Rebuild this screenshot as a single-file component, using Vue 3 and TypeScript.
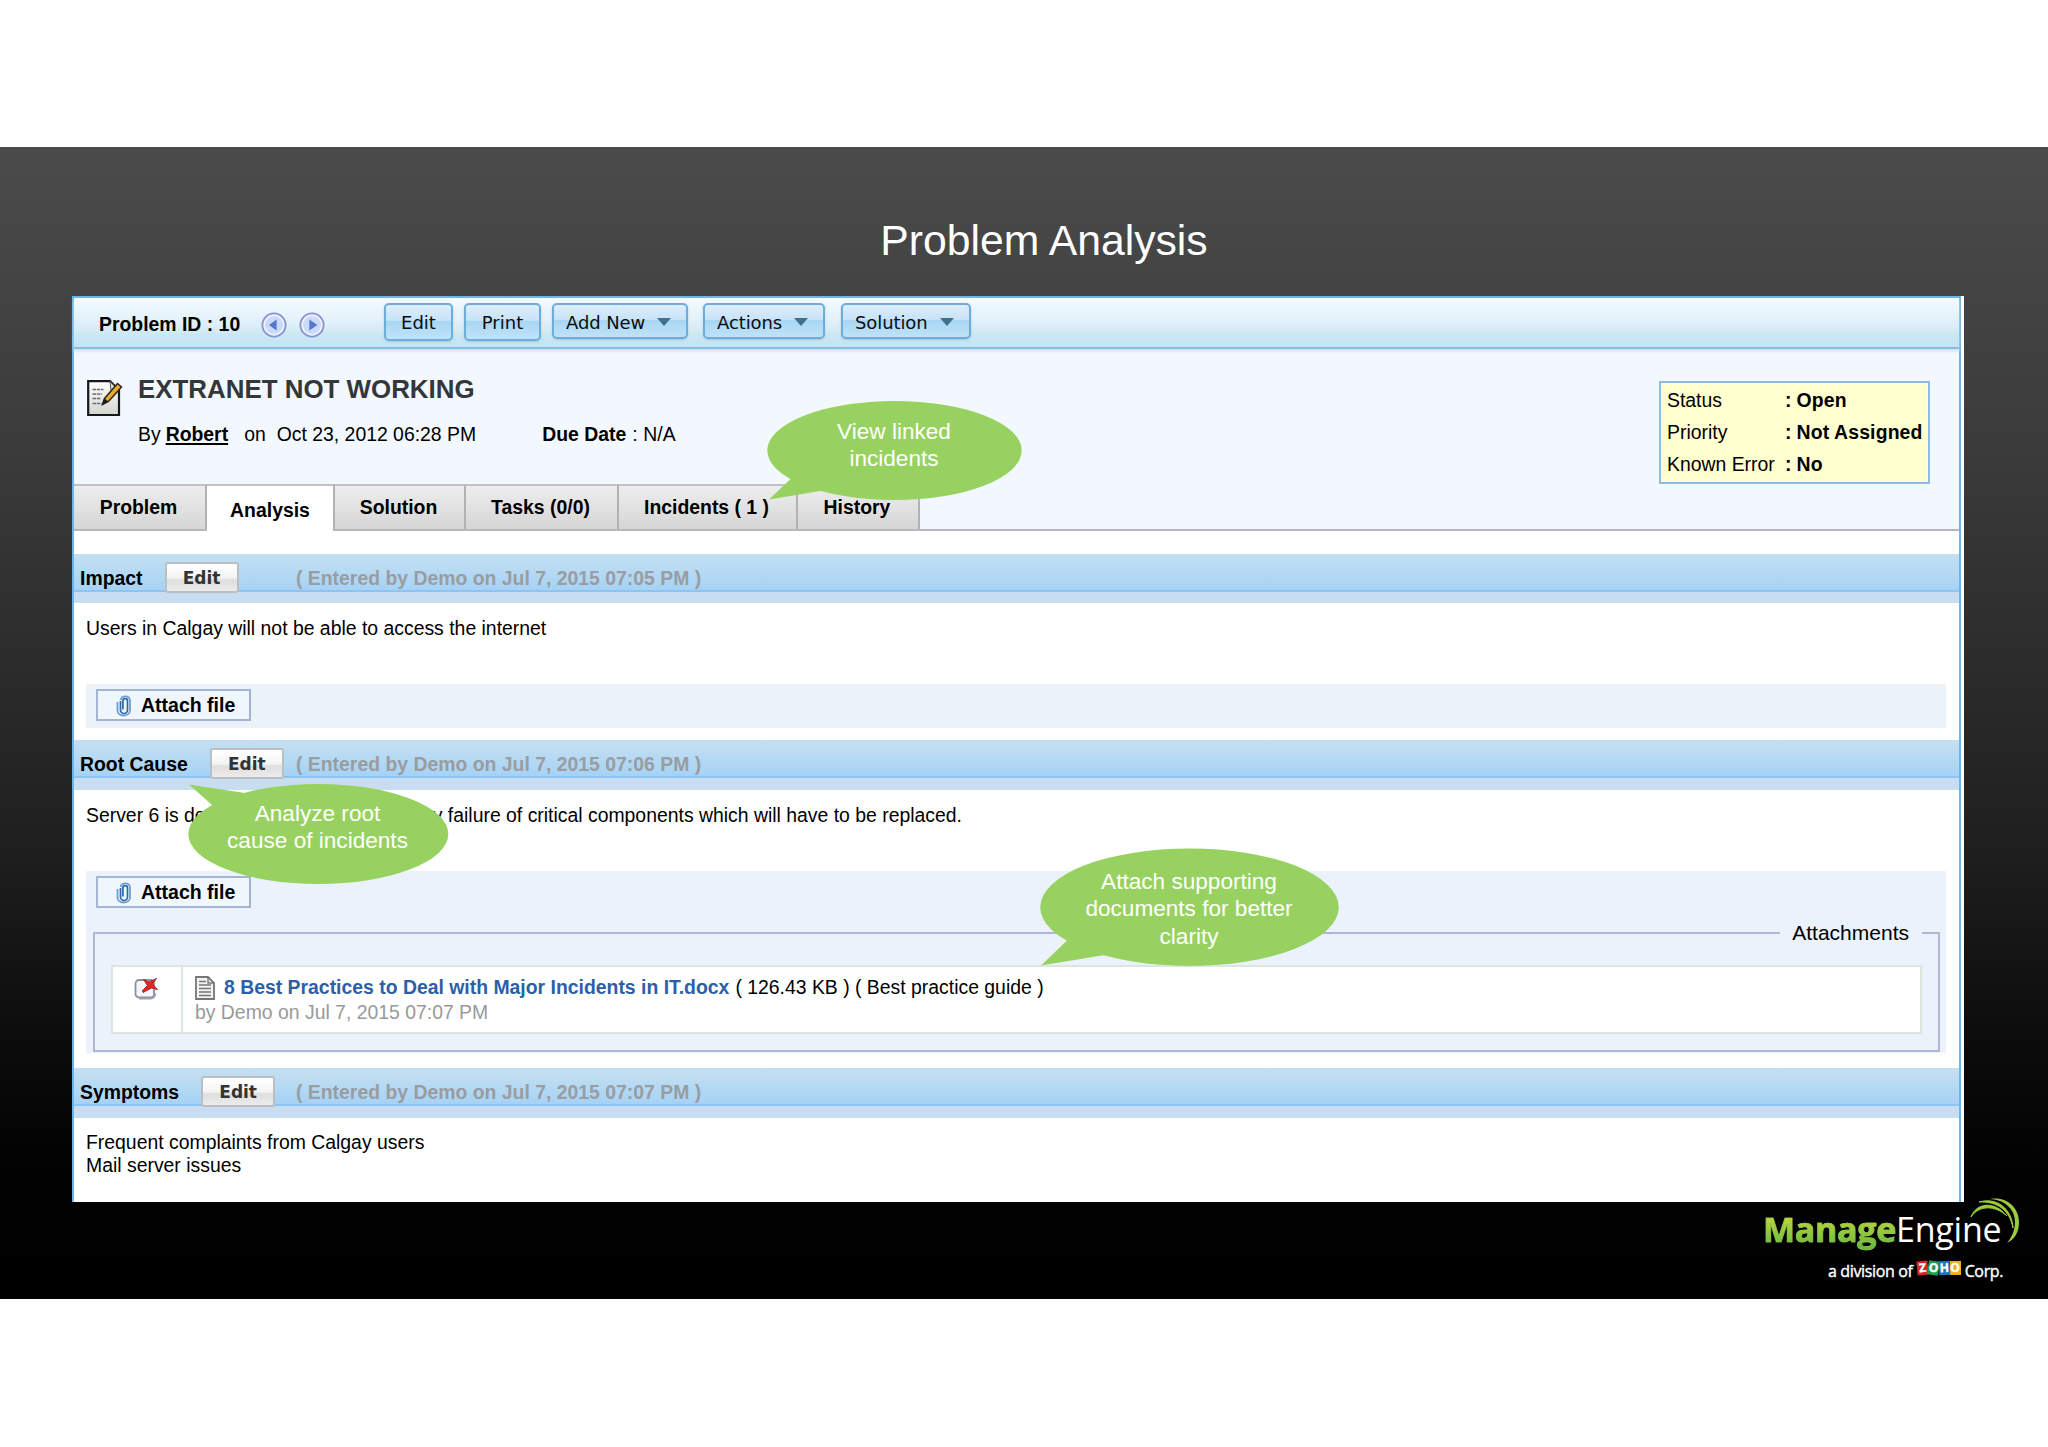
<script setup lang="ts">
interface MenuButton { label: string; width: number; menu: boolean; gap: number }
interface Tab { label: string; width: number; active?: boolean }

const buttons: MenuButton[] = [
  { label: 'Edit', width: 69, menu: false, gap: 11 },
  { label: 'Print', width: 77, menu: false, gap: 11 },
  { label: 'Add New', width: 136, menu: true, gap: 15 },
  { label: 'Actions', width: 122, menu: true, gap: 16 },
  { label: 'Solution', width: 130, menu: true, gap: 0 },
]
const tabs: Tab[] = [
  { label: 'Problem', width: 133 },
  { label: 'Analysis', width: 128, active: true },
  { label: 'Solution', width: 131 },
  { label: 'Tasks (0/0)', width: 153 },
  { label: 'Incidents ( 1 )', width: 179 },
  { label: 'History', width: 122 },
]
const facts = [
  { key: 'Status', value: 'Open' },
  { key: 'Priority', value: 'Not Assigned' },
  { key: 'Known Error', value: 'No' },
]
</script>

<template>
  <div class="page">
    <main class="slide">
      <h1 class="slide-title">Problem Analysis</h1>

      <section class="panel">
        <div class="frame">
          <div class="toolbar">
            <b class="pid">Problem ID : 10</b>
            <svg class="nav" viewBox="0 0 26 26"><circle cx="13" cy="13" r="11.6" fill="#eef2fe" stroke="#8793cf" stroke-width="1.8" /><circle cx="13" cy="13" r="9" fill="#cbdafb" /><path d="M15.6 7.500v11L8 13z" fill="#5577cf" /></svg>
            <svg class="nav second" viewBox="0 0 26 26"><circle cx="13" cy="13" r="11.6" fill="#eef2fe" stroke="#8793cf" stroke-width="1.8" /><circle cx="13" cy="13" r="9" fill="#cbdafb" /><path d="M10.4 7.500v11l8-5.500z" fill="#5577cf" /></svg>
            <div class="buttons">
              <button v-for="b in buttons" :key="b.label" class="tool" :class="{ menu: b.menu }" :style="{ width: b.width + 'px', marginRight: b.gap + 'px' }">
                <span>{{ b.label }}</span><i v-if="b.menu" class="caret" />
              </button>
            </div>
          </div>

          <header class="head">
            <svg class="note" viewBox="0 0 36 38">
              <defs><linearGradient id="paper" x1="0" y1="0" x2="0" y2="1"><stop offset="0" stop-color="#fff" /><stop offset="1" stop-color="#d3d4cf" /></linearGradient></defs>
              <path d="M1.200 2.200H23l9 9V36H1.200z" fill="url(#paper)" stroke="#15181c" stroke-width="2.200" />
              <path d="M23 2.500l8.500 9H24z" fill="#dcdedb" stroke="#555" stroke-width="1" />
              <path d="M5.500 10.500h11M5.500 15h9.500M5.500 19.500h8M5.500 24.500h9" stroke="#666b73" stroke-width="1.700" stroke-dasharray="3.500 .8" />
              <path d="M17.500 19.500L30.500 4.500l4 3.500L21.500 22.500l-6 3z" fill="#e8a92c" stroke="#2d2417" stroke-width="1.500" />
              <path d="M17.500 19.500l4 3-7 3.500z" fill="#1d1d1d" />
            </svg>
            <div class="head-text">
              <h2>EXTRANET NOT WORKING</h2>
              <p class="meta"><span>By</span><b class="robert">Robert</b><span class="on">on</span><span class="date">Oct 23, 2012 06:28 PM</span><b class="due">Due Date</b><span class="na">: N/A</span></p>
            </div>
            <dl class="facts">
              <div v-for="f in facts" :key="f.key"><dt>{{ f.key }}</dt><dd class="colon">:</dd><dd class="value">{{ f.value }}</dd></div>
            </dl>
          </header>

          <nav class="tabs">
            <div v-for="t in tabs" :key="t.label" class="tab" :class="{ active: t.active }" :style="{ width: t.width + 'px' }">{{ t.label }}</div>
          </nav>

          <div class="bar first"><b class="bar-name">Impact</b><button class="edit">Edit</button><span class="entered">( Entered by Demo on Jul 7, 2015 07:05 PM )</span></div>
          <div class="body impact">
            <p>Users in Calgay will not be able to access the internet</p>
            <div class="attach-strip">
              <button class="attach"><svg class="clip" viewBox="0 0 16 22"><path d="M4.500 6v9a3.500 3.500 0 0 0 7 0V6a2.300 2.300 0 0 0-4.600 0v8.500" fill="none" stroke="#2d68aa" stroke-width="1.700" /><path d="M1.500 7v8.500c0 3 2.500 5 6 5s6.500-2 6.500-5V5.500C14 3 12 1.300 9.500 1.300S5 3 4.500 5" fill="none" stroke="#6ea0cf" stroke-width="1.800" /></svg><span>Attach file</span></button>
            </div>
          </div>

          <div class="bar"><b class="bar-name">Root Cause</b><button class="edit">Edit</button><span class="entered">( Entered by Demo on Jul 7, 2015 07:06 PM )</span></div>
          <div class="body root">
            <p class="server"><span class="lead">Server 6 is down</span><span>by failure of critical components which will have to be replaced.</span></p>
            <div class="attach-strip tall">
              <button class="attach"><svg class="clip" viewBox="0 0 16 22"><path d="M4.500 6v9a3.500 3.500 0 0 0 7 0V6a2.300 2.300 0 0 0-4.600 0v8.500" fill="none" stroke="#2d68aa" stroke-width="1.700" /><path d="M1.500 7v8.500c0 3 2.500 5 6 5s6.500-2 6.500-5V5.500C14 3 12 1.300 9.500 1.300S5 3 4.500 5" fill="none" stroke="#6ea0cf" stroke-width="1.800" /></svg><span>Attach file</span></button>
              <div class="group">
                <span class="legend">Attachments</span>
                <div class="file-row">
                  <div class="file-del">
                    <svg viewBox="0 0 24 22"><rect x="1.500" y="2" width="18.500" height="17.500" rx="3.500" fill="#f4f5f8" stroke="#8a90a0" stroke-width="1.800" /><path d="M5 20.500h12q4-.5 4.500-5" fill="none" stroke="#9ba0b0" stroke-width="1.800" /><path d="M9.500 1.500l5.500 2.500L22.500.5l-4 5.500 5 5.500-6-1.500-8.500 4.500-.5-2 5-5z" fill="#e0261f" stroke="#a8282a" stroke-width="1" /></svg>
                  </div>
                  <div class="file-info">
                    <div class="file-name"><svg viewBox="0 0 20 24"><path d="M1 1h12l6 6v16H1z" fill="#f2f2f2" stroke="#777" stroke-width="1.800" /><path d="M13 1v6h6" fill="none" stroke="#777" stroke-width="1.400" /><path d="M4 5.500h7M4 9h12M4 12.500h12M4 16h12M4 19.500h12" stroke="#777" stroke-width="1.500" /></svg><a>8 Best Practices to Deal with Major Incidents in IT.docx</a><span class="size">( 126.43 KB ) ( Best practice guide )</span></div>
                    <div class="file-by">by Demo on Jul 7, 2015 07:07 PM</div>
                  </div>
                </div>
              </div>
            </div>
          </div>

          <div class="bar"><b class="bar-name">Symptoms</b><button class="edit">Edit</button><span class="entered">( Entered by Demo on Jul 7, 2015 07:07 PM )</span></div>
          <div class="body"><p class="two">Frequent complaints from Calgay users<br>Mail server issues</p></div>
        </div>
      </section>

      <div class="bubble b1">
        <svg viewBox="767 400 256 101" fill="#97d260"><ellipse cx="894.500" cy="450.500" rx="127.200" ry="49.500" /><path d="M790.500 479L769 499.500L820 491L850 460z" /></svg>
        <p>View linked<br>incidents</p>
      </div>
      <div class="bubble b2">
        <svg viewBox="188 783 261 102" fill="#97d260"><ellipse cx="318.300" cy="834" rx="130" ry="50" /><path d="M245 793L189 784.500L212 805L270 830z" /></svg>
        <p>Analyze root<br>cause of incidents</p>
      </div>
      <div class="bubble b3">
        <svg viewBox="1040 847 300 120" fill="#97d260"><ellipse cx="1189.500" cy="907.200" rx="149.300" ry="58.800" /><path d="M1067.500 940L1041 965.500L1105 955L1140 920z" /></svg>
        <p>Attach supporting<br>documents for better<br>clarity</p>
      </div>

      <div class="logo">
        <div class="brand"><b>Manage</b><span>Engine</span></div>
        <svg class="swoosh" viewBox="1965 1195 60 52" fill="#9ccb3b"><path d="M1971 1217c5-14 23-17 36-1-12-11-28-11-36 1z" stroke="#9ccb3b" stroke-width="1" /><path d="M1979 1202c17-5 33 6 34 26-3-17-15-27-34-26z" stroke="#9ccb3b" stroke-width="1" /><path d="M1990 1199c16-3 29 8 29 23 0 10-4 17-12 21 5-6 8-13 8-21 0-12-9-22-25-23z" /></svg>
        <div class="corp"><span>a division of</span><span class="zoho"><i>Z</i><i>O</i><i>H</i><i>O</i></span><span>Corp.</span></div>
      </div>
    </main>
  </div>
</template>

<style>
body { margin: 0; background: #fff; }
</style>

<style scoped>
* { box-sizing: border-box; }
.page { width: 2048px; height: 1447px; overflow: hidden; padding-top: 147px; background: #fff; font-family: "Liberation Sans", Arial, sans-serif; font-size: 19.400px; color: #000; }
h1, h2, p, dl, dd { margin: 0; }
button { font-family: inherit; margin: 0; padding: 0; }
.slide { position: relative; height: 1152px; background: linear-gradient(180deg, #4b4b4b 0, #444 130px, #3b3b3b 300px, #2f2f2f 470px, #1f1f1f 700px, #0d0d0d 880px, #020202 1020px, #000 100%); }
.slide-title { height: 149px; padding: 68px 0 0 40px; text-align: center; font-size: 42.700px; line-height: 50px; font-weight: 400; color: #fff; white-space: nowrap; }
.panel { width: 1892px; height: 906px; margin-left: 72px; padding-right: 3px; background: #fff; }
.frame { height: 906px; border: 2px solid #6db4e6; border-bottom: 0; white-space: nowrap; }

.toolbar { display: flex; height: 51px; padding-left: 25px; border-bottom: 2px solid #84bfe2; background: linear-gradient(#f5faff, #ddeff9 55%, #cbe8f2 75%, #c3e4f6); box-shadow: 0 2px 3px #cfdde8; position: relative; }
.pid { width: 162px; line-height: 52px; }
.nav { width: 26px; height: 26px; margin-top: 14px; }
.second { margin-left: 12px; }
.buttons { display: flex; align-items: flex-start; margin: 5px 0 0 59px; }
.tool { display: flex; align-items: center; justify-content: center; height: 38px; border: 2px solid #6caddb; border-radius: 5px; background: linear-gradient(#deedfb, #c8e3f8 45%, #a9d6f4 48%, #bfe2f8); box-shadow: 0 1px 2px #a9c4d4; font: 18px "DejaVu Sans", sans-serif; color: #0c0c0c; }
.tool.menu { height: 36px; justify-content: flex-start; padding: 2px 0 0 12px; letter-spacing: -.1px; }
.caret { margin-left: 12px; border: 7.500px solid transparent; border-top: 8px solid #41708d; border-bottom: 0; }

.head { display: flex; height: 135px; padding-left: 13px; background: #f3f8ff; }
.note { width: 36px; height: 38px; margin-top: 30px; }
.head-text { flex: 1; padding: 24px 0 0 15px; }
h2 { font-size: 25.900px; line-height: 32px; color: #333739; }
.meta { display: flex; margin-top: 17px; line-height: 24px; }
.robert { margin-left: 5px; text-decoration: underline; text-decoration-thickness: 2px; text-underline-offset: 2px; }
.on { margin-left: 16px; }
.date { margin-left: 11px; }
.due { margin-left: 66px; }
.na { margin-left: 6px; letter-spacing: .1px; }
.facts { width: 271px; height: 103px; margin: 32px 29px 0 0; padding: 1px 0 0 6px; border: 2px solid #8fbae3; background: #ffffcf; }
.facts div { display: flex; height: 32.200px; line-height: 33px; }
dt { width: 118px; }
dd { font-weight: 700; }
.colon { width: 11.500px; }
.value { letter-spacing: .15px; }

.tabs { display: flex; height: 47px; border-bottom: 2px solid #b5b7bb; background: #f3f8ff; font-weight: 700; }
.tab { height: 45px; padding-right: 2px; border-top: 2px solid #bfc2c6; border-right: 2px solid #b2b2b4; background: linear-gradient(#ededed, #e2e2e2 50%, #d5d5d5); text-align: center; line-height: 42px; }
.tab.active { height: 47px; padding-right: 0; background: #fff; line-height: 48px; }

.bar { display: flex; position: relative; height: 50px; padding-left: 6px; background: linear-gradient(#c6dff0, #b6daf3 35%, #a6d2f5 36px, #8cc5f3 36px, #8cc5f3 38px, #c8def0 38px); }
.bar.first { height: 49px; margin-top: 23px; }
.bar-name { line-height: 48px; }
.edit { height: 31px; width: 74px; margin: 8px 0 0 22px; border: 2px solid #bcbfc2; border-radius: 3px; background: linear-gradient(#fff, #f4f4f4 50%, #dedede 60%, #ececec); font: 700 17px "DejaVu Sans", sans-serif; color: #333; }
.entered { position: absolute; left: 222px; font-weight: 700; line-height: 48px; color: #999da1; }
.body { padding: 0 13px 0 12px; }
.impact { height: 137px; }
.root { height: 278px; }
.body p { height: 81px; padding: 13px 0 0; line-height: 24px; }
.body p.two { line-height: 23px; }
.server { display: flex; white-space: pre; }
.lead { width: 336px; }
.attach-strip { height: 44px; padding: 5px 7px 0 10px; background: #ebf3f8; }
.attach-strip.tall { height: 182px; padding: 5px 6px 0 7px; background: #ebf2fb; }
.attach { display: flex; align-items: center; width: 155px; height: 32px; border: 2px solid #a3b4d4; background: #f0f6fd; font-size: 19.500px; font-weight: 700; color: #000; padding-left: 18px; }
.tall .attach { margin-left: 3px; }
.clip { width: 16px; height: 22px; margin: 2px 9px 0 0; }
.group { position: relative; height: 120px; margin-top: 24px; padding: 31px 16px 0 16px; border: 2px solid #adb7d6; }
.legend { position: absolute; right: 16px; top: -14px; padding: 0 13px 0 12px; background: #ebf2fb; line-height: 26px; font-size: 21px; }
.file-row { display: flex; height: 69px; border: 2px solid #d9e7df; background: #fff; }
.file-del { width: 70px; border-right: 2px solid #d9e7df; padding: 11px 0 0 21px; }
.file-del svg { width: 24px; height: 22px; }
.file-info { padding: 8px 0 0 12px; }
.file-name { display: flex; height: 25px; line-height: 25px; }
.file-name svg { width: 20px; height: 24px; margin-top: 1px; }
.file-name a { margin-left: 9px; font-weight: 700; color: #2d5fa8; }
.size { margin-left: 6px; }
.file-by { line-height: 24px; color: #999; }

.bubble { position: absolute; color: #fff; text-align: center; font-size: 22.600px; line-height: 27.300px; white-space: nowrap; }
.bubble svg { position: absolute; inset: 0; width: 100%; height: 100%; }
.bubble p { position: relative; left: -1px; }
.b1 { left: 767px; top: 253px; width: 256px; height: 101px; padding-top: 18px; transform: translate(0, 0); }
.b2 { left: 188px; top: 636px; width: 261px; height: 102px; padding-top: 17px; }
.b3 { left: 1040px; top: 700px; width: 300px; height: 120px; padding-top: 21px; }

.logo { position: absolute; left: 1763px; top: 1048px; width: 270px; height: 90px; color: #fff; font-family: "Open Sans", sans-serif; white-space: nowrap; }
.brand { display: flex; height: 64px; padding-top: 1px; font-size: 34px; line-height: 66px; letter-spacing: -.2px; }
.brand b { height: 66px; letter-spacing: -.3px; -webkit-text-stroke: .600px #94c93f; background: linear-gradient(#b9d53f 35%, #6cba45 75%); -webkit-background-clip: text; color: transparent; }
.swoosh { position: absolute; left: 202px; top: 0; width: 60px; height: 52px; }
.corp { display: flex; height: 24px; margin-left: 65px; font-size: 16px; line-height: 24px; letter-spacing: -.35px; -webkit-text-stroke: .400px #fff; }
.zoho { display: flex; margin: 2px 4px 0 4px; height: 16px; }
.zoho i { width: 11px; height: 14px; font: 700 12px/14px "Open Sans", sans-serif; letter-spacing: 0; text-align: center; background: #d9262c; transform: rotate(-5deg); }
.zoho i:nth-child(2) { background: #1f9a50; transform: rotate(8deg); }
.zoho i:nth-child(3) { background: #1e74bd; transform: rotate(-3deg); }
.zoho i:nth-child(4) { background: #f2ae1c; transform: none; }
</style>
